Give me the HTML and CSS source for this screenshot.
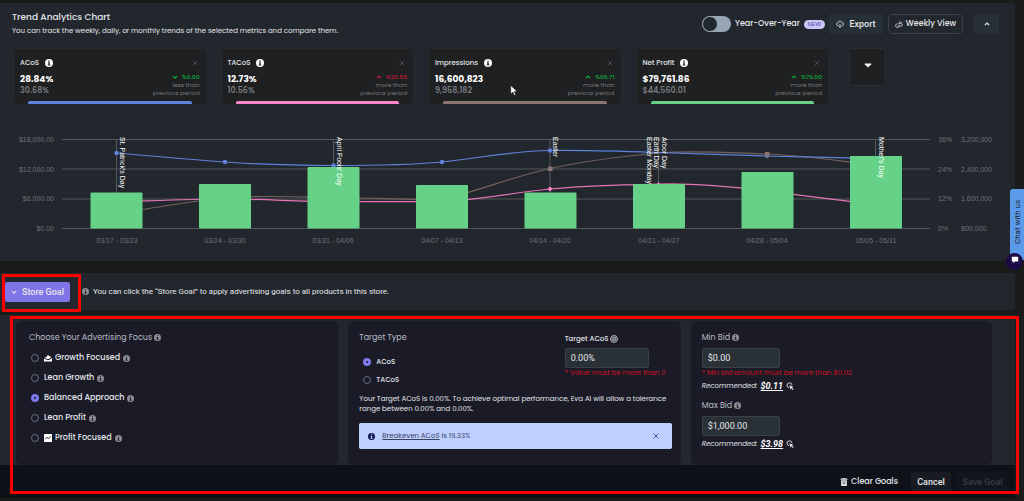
FILE: index.html
```
<!DOCTYPE html>
<html lang="en">
<head>
<meta charset="UTF-8" />
<meta name="viewport" content="width=device-width, initial-scale=1.0"/>
<title>Trend Analytics</title>
<link rel="stylesheet" href="styles.css">
</head>
<body>

<!-- Shared icons -->
<svg class="sprite" aria-hidden="true">
    <symbol id="info" viewBox="0 0 16 16">
        <path fill-rule="evenodd" d="M8 0a8 8 0 1 0 0 16A8 8 0 0 0 8 0zM6.8 3h2.6v2.4H6.8zM6 6.6h3.4v4.6h1.2V13H5.6v-1.8h1.2V8.4H6z"/>
    </symbol>
    <symbol id="close" viewBox="0 0 10 10">
        <path d="M1 1l8 8M9 1L1 9" fill="none" stroke="currentColor" stroke-width="1.3"/>
    </symbol>
    <symbol id="up" viewBox="0 0 10 10">
        <path d="M1.500 7L5 3.500 8.500 7" fill="none" stroke="currentColor" stroke-width="2"/>
    </symbol>
    <symbol id="down" viewBox="0 0 10 10">
        <path d="M1.500 3.500L5 7l3.500-3.500" fill="none" stroke="currentColor" stroke-width="2"/>
    </symbol>
    <symbol id="pick" viewBox="0 0 16 16">
        <path d="M6 11.500A5 5 0 1 1 12 6" fill="none" stroke="currentColor" stroke-width="1.800"/>
        <path d="M6.500 6.500l8.500 3-3 1.500 3.500 3.500-1.500 1.500-3.500-3.500-1.500 3z" fill="currentColor"/>
    </symbol>
</svg>

<main>
<section class="panel trends">
    <header class="trends-header">
        <div class="trends-title">
            <h1>Trend Analytics Chart</h1>
            <p>You can track the weekly, daily, or monthly trends of the selected metrics and compare them.</p>
        </div>
        <div class="toolbar">
            <label class="toggle"><input type="checkbox">Year-Over-Year</label>
            <span class="new-badge">NEW</span>
            <button class="btn export">
                <svg viewBox="0 0 16 16"><path d="M5 11.500H4A3.200 3.200 0 0 1 3.600 5.200 4.500 4.500 0 0 1 12 5a3.300 3.300 0 0 1 .5 6.500H11M8 7v8M5.500 12.500L8 15l2.500-2.500" fill="none" stroke="currentColor" stroke-width="1.600"/></svg>
                Export
            </button>
            <button class="btn weekly">
                <svg viewBox="0 0 16 16"><path d="M7.500 6.500L6 8.500M4.500 7.500a3.800 3.800 0 1 0 4 5h3.500a2.700 2.700 0 0 0 1.500-5H8.500L10.500 2M12 7L14 3.500M5 11.500h4" fill="none" stroke="currentColor" stroke-width="1.500"/></svg>
                Weekly View
            </button>
            <button class="btn collapse" aria-label="Collapse"><svg><use href="#up"/></svg></button>
        </div>
    </header>

    <div class="metrics">
        <article class="metric acos">
            <div class="metric-top"><h2>ACoS</h2><svg class="info"><use href="#info"/></svg><button class="close" aria-label="Remove ACoS"><svg><use href="#close"/></svg></button></div>
            <div class="metric-body">
                <div><strong>28.84%</strong><span class="previous">30.68%</span></div>
                <div class="change"><span class="rate good"><svg><use href="#down"/></svg>%6.00</span>less than<br>previous period</div>
            </div>
        </article>
        <article class="metric tacos">
            <div class="metric-top"><h2>TACoS</h2><svg class="info"><use href="#info"/></svg><button class="close" aria-label="Remove TACoS"><svg><use href="#close"/></svg></button></div>
            <div class="metric-body">
                <div><strong>12.73%</strong><span class="previous">10.56%</span></div>
                <div class="change"><span class="rate bad"><svg><use href="#up"/></svg>%20.55</span>more than<br>previous period</div>
            </div>
        </article>
        <article class="metric impressions">
            <div class="metric-top"><h2>Impressions</h2><svg class="info"><use href="#info"/></svg><button class="close" aria-label="Remove Impressions"><svg><use href="#close"/></svg></button></div>
            <div class="metric-body">
                <div><strong>16,600,823</strong><span class="previous">9,958,182</span></div>
                <div class="change"><span class="rate good"><svg><use href="#up"/></svg>%66.71</span>more than<br>previous period</div>
            </div>
            <svg class="cursor" viewBox="0 0 12 18"><path d="M1 1v13.500l3.200-3 2.300 5 2.300-1-2.300-4.800H11z" fill="#fff" stroke="#111"/></svg>
        </article>
        <article class="metric profit">
            <div class="metric-top"><h2>Net Profit</h2><svg class="info"><use href="#info"/></svg><button class="close" aria-label="Remove Net Profit"><svg><use href="#close"/></svg></button></div>
            <div class="metric-body">
                <div><strong>$79,761.86</strong><span class="previous">$44,560.01</span></div>
                <div class="change"><span class="rate good"><svg><use href="#up"/></svg>%79.00</span>more than<br>previous period</div>
            </div>
        </article>
        <button class="more" aria-label="More metrics"><svg viewBox="0 0 10 10"><path d="M1 3h8v1L5 8 1 4z" fill="#fff"/></svg></button>
    </div>

    <svg class="chart" viewBox="0 0 1015 136" role="img" aria-label="Weekly trend of the selected metrics">
        <g class="grid">
            <path d="M62 14.500H930M62 44H930M62 74H930M62 103.500H930"/>
            <path d="M116.500 14V70M333.500 14V44M550 14V68M658.500 14V60M875.500 14V32"/>
        </g>
        <g class="axis left">
            <text x="54" y="17">$18,000.00</text>
            <text x="54" y="47">$12,000.00</text>
            <text x="54" y="76">$6,000.00</text>
            <text x="54" y="106">$0.00</text>
        </g>
        <g class="axis">
            <text x="938" y="17">36%</text><text x="961" y="17">3,200,000</text>
            <text x="938" y="47">24%</text><text x="961" y="47">2,400,000</text>
            <text x="938" y="76">12%</text><text x="961" y="76">1,600,000</text>
            <text x="938" y="106">0%</text><text x="961" y="106">800,000</text>
        </g>
        <g class="axis weeks">
            <text x="117" y="118">03/17 - 03/23</text>
            <text x="225" y="118">03/24 - 03/30</text>
            <text x="333" y="118">03/31 - 04/06</text>
            <text x="442" y="118">04/07 - 04/13</text>
            <text x="550" y="118">04/14 - 04/20</text>
            <text x="659" y="118">04/21 - 04/27</text>
            <text x="767" y="118">04/28 - 05/04</text>
            <text x="876" y="118">05/05 - 05/11</text>
        </g>
        <g class="lines">
            <path class="line-pink" d="M117 77C150 76 190 74 225 74S300 76.500 333 76.500 410 77 442 76.500 510 68 550 64 625 60 659 59 735 62 767 66 840 76 876 79"/>
            <path class="line-brown" d="M117 88C150 84 190 76 225 73S300 72 333 72.500 420 75 442 74.500C475 67 515 51 550 43.500S625 31 659 28 735 28 767 29 840 36 876 40"/>
            <path class="line-blue" d="M117 28C150 31 190 34.500 225 37S300 40.500 333 40.500 410 40 442 37 510 26 550 25.500 625 26.500 659 27.500 735 30 767 31 840 32 876 34"/>
        </g>
        <g fill="#5f82da">
            <circle cx="116.500" cy="28" r="2.200"/><circle cx="225" cy="37" r="2.200"/><circle cx="333.500" cy="40.500" r="2.200"/><circle cx="442" cy="37" r="2.200"/><circle cx="550" cy="25.500" r="2.200"/><circle cx="767" cy="31" r="2"/>
        </g>
        <g fill="#8b7572">
            <rect x="548" y="41.500" width="4.500" height="4.500"/><rect x="765" y="27" width="4.500" height="4.500"/>
        </g>
        <path d="M550 61.500l2.500 2.500-2.500 2.500-2.500-2.500zM658.500 57l2 2.500h-4z" fill="#ff86cb"/>
        <g class="bars">
            <rect x="90.500" y="67.500" width="52" height="36" rx="1"/>
            <rect x="199" y="59" width="52" height="44.500" rx="1"/>
            <rect x="307.500" y="42" width="52" height="61.500" rx="1"/>
            <rect x="416" y="60" width="52" height="43.500" rx="1"/>
            <rect x="524.500" y="67.500" width="52" height="36" rx="1"/>
            <rect x="633" y="59" width="52" height="44.500" rx="1"/>
            <rect x="741.500" y="47" width="52" height="56.500" rx="1"/>
            <rect x="850" y="31" width="52" height="72.500" rx="1"/>
        </g>
        <g class="events">
            <text transform="translate(120 12) rotate(90)">St. Patrick's Day</text>
            <text transform="translate(337 12) rotate(90)">April Fools' Day</text>
            <text transform="translate(553 12) rotate(90)">Easter</text>
            <text transform="translate(662 12) rotate(90)">Arbor Day</text>
            <text transform="translate(654 12) rotate(90)">Earth Day</text>
            <text transform="translate(647 12) rotate(90)">Easter Monday</text>
            <text transform="translate(879 12) rotate(90)">Mother's Day</text>
        </g>
    </svg>
</section>

<section class="panel store">
    <button class="btn store-goal"><svg><use href="#down"/></svg>Store Goal</button>
    <svg class="info"><use href="#info"/></svg>
    <p>You can click the “Store Goal” to apply advertising goals to all products in this store.</p>
    <div class="marker"></div>
</section>

<form class="goals">
    <div class="goal-cards">
        <fieldset class="card focus">
            <legend>Choose Your Advertising Focus <svg class="info"><use href="#info"/></svg></legend>
            <label><input type="radio" name="focus">
                <svg class="focus-icon" viewBox="0 0 14 14"><path d="M0 13V8l3 1 3 2 4-1 4-3v6zM1 6l4-1 2-4 2 3 4 1-3 3-4 1z" fill="#fff"/></svg>
                Growth Focused <svg class="info"><use href="#info"/></svg></label>
            <label><input type="radio" name="focus">Lean Growth <svg class="info"><use href="#info"/></svg></label>
            <label><input type="radio" name="focus" checked>Balanced Approach <svg class="info"><use href="#info"/></svg></label>
            <label><input type="radio" name="focus">Lean Profit <svg class="info"><use href="#info"/></svg></label>
            <label><input type="radio" name="focus">
                <svg class="focus-icon" viewBox="0 0 14 14"><rect width="14" height="14" rx="1" fill="#fff"/><path d="M2 9l3-3 3 2 4-4" fill="none" stroke="#1a1b27" stroke-width="1.600"/></svg>
                Profit Focused <svg class="info"><use href="#info"/></svg></label>
        </fieldset>

        <div class="card target">
            <div class="target-top">
                <fieldset>
                    <legend>Target Type</legend>
                    <label><input type="radio" name="target" checked>ACoS</label>
                    <label><input type="radio" name="target">TACoS</label>
                </fieldset>
                <div class="target-value">
                    <label for="target-acos">Target ACoS
                        <svg viewBox="0 0 16 16" fill="none" stroke="currentColor" stroke-width="1.500"><circle cx="8" cy="8" r="7"/><circle cx="8" cy="8" r="4"/><circle cx="8" cy="8" r="1"/></svg>
                    </label>
                    <input id="target-acos" type="text" value="0.00%">
                    <p class="error">* Value must be more than 0</p>
                </div>
            </div>
            <p class="note">Your Target ACoS is 0.00%. To achieve optimal performance, Eva AI will allow a tolerance range between 0.00% and 0.00%.</p>
            <div class="alert">
                <svg class="info"><use href="#info"/></svg>
                <span><a href="#">Breakeven ACoS</a> is 19.33%</span>
                <button type="button" class="close" aria-label="Dismiss"><svg><use href="#close"/></svg></button>
            </div>
        </div>

        <div class="card bids">
            <label for="min-bid">Min Bid <svg class="info"><use href="#info"/></svg></label>
            <input id="min-bid" type="text" value="$0.00">
            <p class="error">* Min bid amount must be more than $0.02</p>
            <p class="recommended">Recommended: <a href="#">$0.11</a> <svg><use href="#pick"/></svg></p>
            <label for="max-bid">Max Bid <svg class="info"><use href="#info"/></svg></label>
            <input id="max-bid" type="text" value="$1,000.00">
            <p class="recommended">Recommended: <a href="#">$3.98</a> <svg><use href="#pick"/></svg></p>
        </div>
    </div>

    <footer class="actions">
        <button type="button" class="btn clear">
            <svg viewBox="0 0 12 14"><path fill-rule="evenodd" d="M0 1h4V0h4v1h4v2H0zM1 4h10v10H1zm3 2v5h1V6zm3 0v5h1V6z" fill="currentColor"/></svg>
            Clear Goals
        </button>
        <button type="button" class="btn cancel">Cancel</button>
        <button type="submit" class="btn save" disabled>Save Goal</button>
    </footer>
    <div class="marker"></div>
</form>
</main>

<aside class="chat">
    <button class="chat-tab">Chat with us</button>
    <button class="chat-bubble" aria-label="Open chat"><svg viewBox="0 0 10 10"><path d="M1 1h8v6H5L3 9V7H1z" fill="#fff"/></svg></button>
</aside>

</body>
</html>
```
FILE: styles.css
```
* {
    box-sizing: border-box;
}

body {
    margin: 0;
    background: #1a1c1b;
    color: #e4e6e9;
    font-family: Poppins, Inter, sans-serif;
    font-size: 8px;
    line-height: 12px;
}

h1, h2, p, fieldset, legend {
    margin: 0;
    padding: 0;
    border: 0;
}

h1, h2 {
    font-weight: 500;
}

button, input {
    font-family: inherit;
    font-size: inherit;
    color: inherit;
    margin: 0;
}

button {
    border: none;
    background: none;
    padding: 0;
    cursor: pointer;
}

svg {
    width: 8px;
    height: 8px;
    flex: none;
}

.sprite {
    position: absolute;
    width: 0;
    height: 0;
}

.info {
    width: 7px;
    height: 7px;
    fill: #8d8e92;
    vertical-align: -1px;
}

main {
    padding: 3px 9px 3px 0;
}

.panel {
    background: #22262d;
    border-radius: 0 4px 4px 0;
}

.btn {
    display: flex;
    align-items: center;
    justify-content: center;
    gap: 5px;
    height: 20px;
    border-radius: 2px;
    background: #283037;
    font-weight: 500;
}

/* Trends */
.trends-header {
    display: flex;
    justify-content: space-between;
    padding: 7px 16px 0 12px;
}

.trends-title h1 {
    font-size: 9px;
    line-height: 14px;
}

.trends-title p {
    font-size: 7px;
    line-height: 13px;
}

.toolbar {
    display: flex;
    align-items: center;
    height: 26px;
    margin-top: 1px;
}

.toggle {
    display: flex;
    align-items: center;
    gap: 4px;
    font-weight: 500;
}

.toggle input {
    appearance: none;
    width: 29px;
    height: 16px;
    border-radius: 8px;
    background: #96a5b4;
}

.toggle input::before {
    content: "";
    display: block;
    width: 14px;
    height: 14px;
    margin: 1px;
    border-radius: 50%;
    background: #22262d;
}

.new-badge {
    margin: 0 4px;
    padding: 0 4px;
    border-radius: 5px;
    background: #c9c8fa;
    color: #4e46a8;
    font-size: 6px;
    line-height: 9px;
}

.export {
    width: 54px;
    font-family: Roboto, sans-serif;
    font-size: 9px;
}

.weekly {
    width: 75px;
    margin: 0 11px 0 5px;
    gap: 3px;
    border: 1px solid #3c444b;
    border-radius: 5px;
    background: none;
}

.collapse {
    width: 25px;
}

.collapse svg {
    width: 6px;
    height: 6px;
}

.metrics {
    display: grid;
    grid-template-columns: repeat(4, 1fr) 43px;
    column-gap: 14px;
    padding: 11px 129px 0 13px;
}

.metric {
    position: relative;
    height: 57px;
    padding: 8px 6px 0;
    border-radius: 3px;
    background: #1e2022;
    border: 1px solid #262a2d;
}

.metric::after {
    content: "";
    position: absolute;
    left: 14px;
    right: 14px;
    bottom: 0;
    height: 3px;
    border-radius: 2px 2px 0 0;
    background: var(--series);
}

.acos { --series: #5f82da; }
.tacos { --series: #ff86cb; }
.impressions { --series: #8b7572; }
.profit { --series: #66d287; }

.metric-top {
    display: flex;
    align-items: center;
    gap: 6px;
    height: 12px;
}

.metric-top h2 {
    font-size: 7px;
}

.metric-top .info {
    width: 8px;
    height: 8px;
    fill: #fff;
}

.metric-top .close {
    display: flex;
    margin: 0 2px 0 auto;
    color: #535960;
}

.metric-top .close svg {
    width: 6px;
    height: 6px;
}

.metric-body {
    display: flex;
    justify-content: space-between;
}

.metric strong, .previous {
    display: block;
    font-weight: 600;
}

.metric strong {
    margin-top: 4px;
    color: #fff;
    font-size: 9px;
    font-weight: 700;
}

.previous {
    color: #777a7e;
}

.change {
    margin-top: 4px;
    color: #777a7e;
    font-size: 6px;
    line-height: 8px;
    text-align: right;
}

.rate {
    display: flex;
    align-items: center;
    justify-content: flex-end;
    gap: 4px;
    font-weight: 500;
}

.rate svg {
    width: 6px;
    height: 6px;
}

.good { color: #13ad37; }
.bad { color: #c4183c; }

.cursor {
    position: absolute;
    left: 81px;
    top: 35px;
    width: 8px;
    height: 13px;
}

.more {
    height: 38px;
    margin-left: 6px;
    border: 1px solid #2a2e31;
    border-radius: 2px;
    background: #1e2022;
}

.chart {
    display: block;
    width: 100%;
    height: auto;
    margin-top: 20px;
    font-family: "Liberation Sans", Arial, sans-serif;
    font-size: 7px;
}

.grid {
    stroke: #54585d;
}

.axis {
    fill: #6e737a;
}

.left {
    text-anchor: end;
}

.weeks {
    text-anchor: middle;
}

.lines {
    fill: none;
    stroke-width: 1.200;
}

.line-blue { stroke: #5f82da; }
.line-pink { stroke: #e573b5; }
.line-brown { stroke: #75625f; }

.bars {
    fill: #66d287;
}

.events {
    fill: #fff;
}

/* Store goal bar */
.store {
    position: relative;
    display: flex;
    align-items: center;
    height: 37px;
    margin-top: 12px;
    padding-left: 5px;
    font-family: Roboto, sans-serif;
}

.store-goal {
    width: 65px;
    margin-right: 12px;
    background: #8075e8;
    font-size: 9px;
}

.store-goal svg {
    width: 6px;
    height: 6px;
}

.store p {
    margin-left: 4px;
    font-size: 8px;
}

.marker {
    position: absolute;
    border: 3px solid #f90000;
    pointer-events: none;
}

.store .marker {
    left: 2px;
    top: 1px;
    width: 79px;
    height: 38px;
}

.goals .marker {
    left: 10px;
    right: -4px;
    top: 1px;
    bottom: 4px;
}

/* Goal form */
.goals {
    position: relative;
    margin-top: 5px;
}

.goal-cards {
    display: grid;
    grid-template-columns: 322fr 332fr 301fr;
    gap: 10px;
    padding: 6px 23px 0 16px;
    background: #22262d;
}

.card {
    min-width: 0;
    padding: 11px 9px 15px 11px;
    border-radius: 6px;
    background: #1a1b27;
}

.card legend {
    float: left;
    width: 100%;
    height: 12px;
    color: #b9bbc2;
}

.focus {
    padding-left: 13px;
}

.focus legend {
    margin-bottom: 4px;
}

.focus label, .target fieldset label {
    display: flex;
    align-items: center;
    gap: 3px;
    clear: both;
    height: 20px;
    padding-left: 2px;
    font-weight: 500;
}

input[type="radio"] {
    appearance: none;
    width: 8px;
    height: 8px;
    margin-right: 2px;
    border: 1px solid #66717c;
    border-radius: 50%;
}

input[type="radio"]:checked {
    border: 3px solid #7f79ee;
    background: #1a1b27;
}

.focus-icon {
    width: 8px;
    height: 8px;
}

.target-top {
    display: flex;
    justify-content: space-between;
}

.target fieldset legend {
    margin-bottom: 9px;
}

.target fieldset label {
    height: 18px;
    padding-left: 4px;
    font-size: 7px;
}

.target-value {
    width: 107px;
}

.target-value label {
    display: block;
    height: 12px;
    margin: 1px 0 3px;
    font-size: 7px;
    font-weight: 500;
}

.target-value svg {
    vertical-align: -2px;
}

input[type="text"] {
    display: block;
    width: 84px;
    height: 20px;
    padding: 0 5px;
    border: 1px solid #3a4146;
    border-radius: 2px;
    background: #2a3136;
    font-family: Roboto, sans-serif;
    font-size: 9px;
}

.error {
    color: #d3101c;
    font-size: 7px;
    line-height: 10px;
}

.note {
    margin-top: 5px;
    font-size: 7px;
    line-height: 10px;
}

.alert {
    display: flex;
    align-items: center;
    gap: 7px;
    height: 26px;
    margin-top: 9px;
    padding: 0 13px 0 9px;
    border-radius: 2px;
    background: #bed0ff;
    color: #37415f;
    font-size: 7px;
}

.alert .info {
    fill: #14185a;
}

.alert a {
    color: inherit;
}

.alert .close {
    display: flex;
    margin-left: auto;
}

.alert .close svg {
    width: 6px;
    height: 6px;
}

.bids label {
    display: block;
    height: 12px;
    margin-bottom: 4px;
    color: #b9bbc2;
}

.bids input[type="text"] {
    width: 78px;
}

.recommended {
    display: flex;
    align-items: center;
    gap: 3px;
    height: 12px;
    margin: 2px 0 8px;
    font-size: 7px;
    font-style: italic;
}

.recommended:last-child {
    margin-bottom: 0;
}

.recommended a {
    color: #fff;
    font-family: Roboto, sans-serif;
    font-size: 9px;
    font-weight: 700;
}

.actions {
    display: flex;
    align-items: center;
    justify-content: flex-end;
    gap: 5px;
    height: 33px;
    padding-right: 6px;
    background: #0e1118;
}

.clear {
    gap: 3px;
    margin-right: 8px;
    background: none;
}

.cancel, .save {
    background: #181c22;
    font-family: Roboto, sans-serif;
    font-size: 9px;
}

.cancel {
    width: 40px;
}

.save {
    width: 53px;
    background: #12161c;
    color: #363d48;
}

/* Chat widget pinned to the window edge */
.chat {
    position: fixed;
    top: 189px;
    right: 0;
    width: 14px;
}

.chat-tab {
    width: 14px;
    height: 71px;
    padding-top: 6px;
    border-radius: 0 3px 3px 0;
    background: #5b9ae8;
    color: #1c2430;
    font-family: Roboto, sans-serif;
    font-size: 8px;
    writing-mode: vertical-rl;
    transform: rotate(180deg);
}

.chat-bubble {
    position: absolute;
    right: 1px;
    bottom: -6px;
    width: 17px;
    height: 17px;
    border-radius: 50%;
    background: #1b0a46;
}
```
